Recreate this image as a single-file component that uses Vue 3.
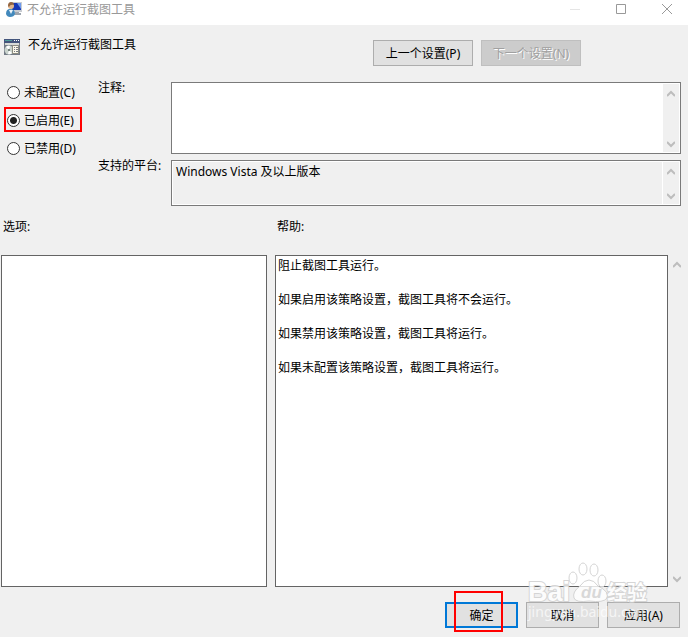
<style>
body {
    margin: 0;
    background: #f0f0f0;
}
</style>

<style scoped>
.dialog {
    position: relative;
    display: flex;
    flex-direction: column;
    min-height: 100vh;
    background: #f0f0f0;
    color: #000;
    font-family: "Noto Sans", "Noto Sans CJK SC", sans-serif;
    font-size: 12px;
    line-height: 17px;
}

.title-bar {
    display: flex;
    align-items: flex-start;
    gap: 5px;
    height: 25px;
    padding-left: 6px;
    box-sizing: border-box;
    background: #fff;
    color: #999;
}

.title-bar h1,
.policy h2 {
    margin: 0;
    font-size: 12px;
    font-weight: 400;
    line-height: 17px;
}

.title-bar h1 {
    flex: 1;
    padding-top: 1px;
}

.title-bar svg,
.policy svg {
    display: block;
    flex: none;
}

.title-icon {
    padding-top: 1px;
}

.window-btns {
    display: flex;
    align-self: stretch;
    margin-right: -2px;
}

.window-btns button {
    display: flex;
    align-items: center;
    justify-content: center;
    width: 46px;
    padding: 0 0 7px;
    border: none;
    background: none;
    color: #999;
}

.window-btns button:disabled {
    color: #e5e5e5;
}

.header {
    display: flex;
    align-items: flex-start;
    height: 53px;
    padding: 0 4px;
}

.policy {
    display: flex;
    flex: 1;
    align-items: flex-start;
    gap: 8px;
    padding-top: 11px;
}

.policy svg {
    margin-top: 3px;
}

.nav-btns {
    display: flex;
    gap: 8px;
    padding-top: 15px;
    padding-right: 103px;
}

.btn {
    width: 73px;
    height: 26px;
    padding: 0;
    border: 1px solid #adadad;
    background: #e1e1e1;
    color: #000;
    font-family: inherit;
    font-size: 12px;
    line-height: 17px;
}

.nav-btns .btn {
    width: 100px;
}

.btn:disabled {
    border-color: #bfbfbf;
    background: #ccc;
    color: #a0a0a0;
    text-shadow: 1px 1px 0 #fff;
}

.settings {
    display: grid;
    grid-template-columns: 98px 1fr;
    padding-right: 7px;
}

.states {
    min-width: 0;
    margin: 0;
    padding: 0;
    border: none;
}

.state {
    position: relative;
    display: flex;
    align-items: center;
    gap: 4px;
    height: 28px;
    padding-left: 7px;
}

.state input {
    width: 13px;
    height: 13px;
    margin: 0;
    border: 1px solid #333;
    border-radius: 50%;
    background: #fff;
    appearance: none;
}

.state input:checked {
    background: radial-gradient(circle, #222 0 3px, #fff 4px);
}

.mark::after {
    content: "";
    position: absolute;
    border: 2px solid #f00;
    pointer-events: none;
}

.state.mark::after {
    inset: 1px 16px 2px 4px;
}

.fields {
    display: grid;
    grid-template-columns: 73px 1fr;
    grid-template-rows: 72px 46px;
    row-gap: 6px;
    padding-top: 4px;
}

.fields label {
    margin-top: -3px;
}

.box {
    display: flex;
    padding: 1px;
    border: 1px solid #7a7a7a;
    background: #fff;
}

.box textarea {
    flex: 1;
    min-width: 0;
    padding: 1px 3px;
    border: none;
    outline: none;
    resize: none;
    overflow: hidden;
    background: #fff;
    color: #000;
    font: inherit;
}

.box textarea:read-only {
    margin-right: 1px;
    background: #f0f0f0;
}

.scroll {
    display: flex;
    flex: none;
    flex-direction: column;
    justify-content: space-between;
    align-items: center;
    width: 16px;
    padding: 5px 0 4px;
    box-sizing: border-box;
    background: #f0f0f0;
    color: #bdbdbd;
}

.scroll svg {
    display: block;
}

.panels {
    display: grid;
    flex: 1;
    grid-template-columns: 266fr 410fr;
    grid-template-rows: auto 1fr;
    column-gap: 8px;
    padding: 12px 3px 0 1px;
}

.panels h3 {
    margin: 0;
    padding: 0 2px 20px;
    font-size: 12px;
    font-weight: 400;
}

.options {
    border: 1px solid #646464;
    background: #fff;
}

.help {
    display: flex;
}

.help-text {
    flex: 1;
    padding: 1px 2px;
    border: 1px solid #646464;
    background: #fff;
}

.help-text p {
    margin: 0 0 17px;
}

.help .scroll {
    width: 17px;
}

.footer {
    display: flex;
    justify-content: flex-end;
    gap: 8px;
    padding: 15px 8px 9px;
}

.ok {
    position: relative;
    border: 2px solid #0078d7;
}

.ok.mark::after {
    inset: -13px 13px -6px 7px;
}

.watermark {
    position: absolute;
    right: 22px;
    bottom: 10px;
    width: 140px;
    height: 66px;
    pointer-events: none;
}
</style>

<template>
    <main class="dialog">
        <header class="title-bar">
            <svg class="title-icon" width="16" height="16" viewBox="0 0 16 16">
                <path d="M5 1h11v10H5z" fill="#c8ccd2" />
                <path d="M6 2h9v7H6z" fill="#1738b5" />
                <path d="M11 2h4v6z" fill="#6f9bed" />
                <path d="M9 11h4v1h2v2H8z" fill="#9da5af" />
                <path d="M0 13q0-5 4-5 5 0 5 5-1 3-5 3-3 0-4-3z" fill="#4389bc" />
                <path d="M3 9l2 4 2-4z" fill="#eef5fa" />
                <circle cx="5" cy="5" r="3" fill="#e2b68d" />
                <path d="M2 5q0-4 3-4t3 3Q4 3 3 6z" fill="#936542" />
            </svg>
            <h1>不允许运行截图工具</h1>
            <div class="window-btns">
                <button type="button" aria-label="最小化" disabled>
                    <svg width="10" height="10" viewBox="0 0 10 10"><path d="M0 5.5h10" stroke="currentColor" /></svg>
                </button>
                <button type="button" aria-label="最大化">
                    <svg width="10" height="10" viewBox="0 0 10 10"><path d="M.5.5h9v9h-9z" fill="none" stroke="currentColor" /></svg>
                </button>
                <button type="button" aria-label="关闭">
                    <svg width="10" height="10" viewBox="0 0 10 10"><path d="M0 0l10 10M10 0L0 10" stroke="currentColor" /></svg>
                </button>
            </div>
        </header>

        <section class="header">
            <div class="policy">
                <svg width="16" height="16" viewBox="0 0 16 16">
                    <path d="M0 0h16v16H0z" fill="#737b86" />
                    <path d="M0 0h16v4H0z" fill="#44557c" />
                    <path d="M1 1h7v1H1z" fill="#4f9d9a" />
                    <path d="M10 1h1v1h-1zM12 1h1v1h-1zM14 1h1v1h-1z" fill="#fff" />
                    <path d="M1 4h14v2H1z" fill="#d8dcd8" />
                    <circle cx="5" cy="11" r="4.5" fill="#c9d3cd" />
                    <path d="M5 11L2 8q2-2 4-1zM5 11l3 3q-2 2-4 1z" fill="#fff" />
                    <circle cx="5" cy="11" r="1" fill="#54645c" />
                    <path d="M8.500 6.500h6v8h-6z" fill="#fbf8ea" stroke="#8a8b80" />
                    <path d="M10 8.500h1M12 8.500h2M10 10.500h1M12 10.500h2M10 12.500h1M12 12.500h2" stroke="#777c82" />
                </svg>
                <h2>不允许运行截图工具</h2>
            </div>
            <div class="nav-btns">
                <button class="btn" type="button">上一个设置(P)</button>
                <button class="btn" type="button" disabled>下一个设置(N)</button>
            </div>
        </section>

        <section class="settings">
            <fieldset class="states" aria-label="状态">
                <label v-for="item in states" :key="item.value" class="state" :class="{ mark: item.marked }">
                    <input v-model="state" type="radio" name="state" :value="item.value" />
                    <span>{{ item.label }}</span>
                </label>
            </fieldset>
            <div class="fields">
                <label for="comment">注释:</label>
                <div class="box">
                    <textarea id="comment" v-model="comment"></textarea>
                    <div class="scroll">
                        <svg v-for="d in arrows" :key="d" width="8" height="9" viewBox="0 0 8 9"><path :d="d" fill="none" stroke="currentColor" stroke-width="2" /></svg>
                    </div>
                </div>
                <label for="platform">支持的平台:</label>
                <div class="box">
                    <textarea id="platform" readonly :value="platform"></textarea>
                    <div class="scroll">
                        <svg v-for="d in arrows" :key="d" width="8" height="9" viewBox="0 0 8 9"><path :d="d" fill="none" stroke="currentColor" stroke-width="2" /></svg>
                    </div>
                </div>
            </div>
        </section>

        <section class="panels">
            <h3>选项:</h3>
            <h3>帮助:</h3>
            <div class="options"></div>
            <div class="help">
                <div class="help-text">
                    <p v-for="line in helpLines" :key="line">{{ line }}</p>
                </div>
                <div class="scroll">
                    <svg v-for="d in arrows" :key="d" width="8" height="9" viewBox="0 0 8 9"><path :d="d" fill="none" stroke="currentColor" stroke-width="2" /></svg>
                </div>
            </div>
        </section>

        <footer class="footer">
            <button class="btn ok mark" type="button">确定</button>
            <button class="btn" type="button">取消</button>
            <button class="btn" type="button">应用(A)</button>
        </footer>

        <svg class="watermark" viewBox="0 0 140 66" aria-hidden="true">
            <g fill="#fff" fill-opacity=".8" stroke="#d4d4d4" stroke-width="1">
                <ellipse cx="47" cy="17" rx="4" ry="6" />
                <ellipse cx="57" cy="8" rx="4" ry="6" />
                <ellipse cx="68" cy="9" rx="4" ry="6" />
                <ellipse cx="76" cy="20" rx="4" ry="6" />
                <path d="M63 19q5 0 9 6 12 6 9 12-3 5-18 3-13 2-15-3-2-6 6-12 4-6 9-6z" />
            </g>
            <g font-family="Liberation Sans, Noto Sans CJK SC, sans-serif" font-weight="700">
                <g fill="#fff" stroke="#d0d0d0" paint-order="stroke" stroke-width="2" opacity=".85">
                    <text x="2" y="40" font-size="27">Bai</text>
                    <text x="81" y="39" font-size="20">经验</text>
                </g>
                <text x="55" y="37" font-size="17" font-style="italic" fill="#d8d8d8">du</text>
            </g>
            <text x="2" y="56" font-family="Noto Sans, sans-serif" font-size="14" fill="#fff" fill-opacity=".7">jingyan.baidu.com</text>
        </svg>
    </main>
</template>

<script setup>
import { ref } from 'vue'

const state = ref('enabled')
const comment = ref('')
const platform = 'Windows Vista 及以上版本'

const states = [
    { value: 'none', label: '未配置(C)' },
    { value: 'enabled', label: '已启用(E)', marked: true },
    { value: 'disabled', label: '已禁用(D)' },
]

const helpLines = [
    '阻止截图工具运行。',
    '如果启用该策略设置，截图工具将不会运行。',
    '如果禁用该策略设置，截图工具将运行。',
    '如果未配置该策略设置，截图工具将运行。',
]

const arrows = ['M0 7l4-4 4 4', 'M0 3l4 4 4-4']
</script>
